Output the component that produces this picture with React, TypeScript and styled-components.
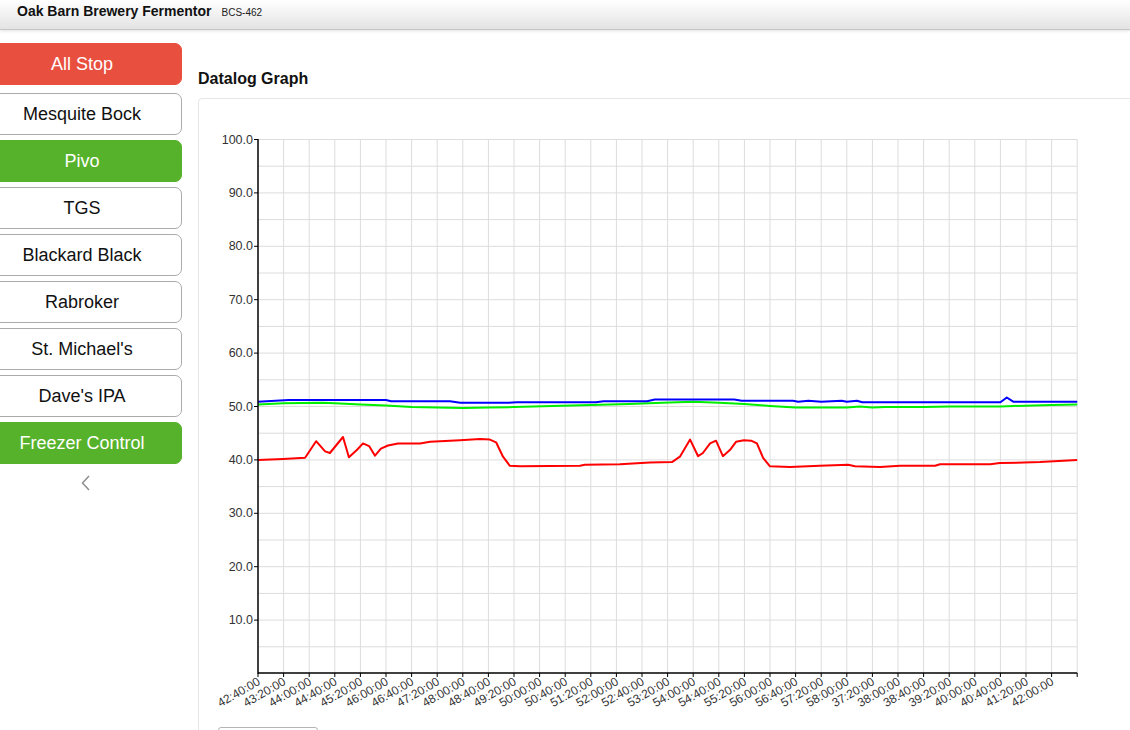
import React from 'react'
import styled, { createGlobalStyle } from 'styled-components'

const GlobalStyle = createGlobalStyle`
  html, body {
    margin: 0;
    padding: 0;
    height: 730px;
    overflow: hidden;
    background: #fff;
    font-family: "Liberation Sans", Arial, sans-serif;
  }
`

type Variant = 'stop' | 'active' | 'idle'

const RECIPES: { name: string; variant: Variant }[] = [
  { name: 'Mesquite Bock', variant: 'idle' },
  { name: 'Pivo', variant: 'active' },
  { name: 'TGS', variant: 'idle' },
  { name: 'Blackard Black', variant: 'idle' },
  { name: 'Rabroker', variant: 'idle' },
  { name: "St. Michael's", variant: 'idle' },
  { name: "Dave's IPA", variant: 'idle' },
  { name: 'Freezer Control', variant: 'active' },
]

const TIME_LABELS = [
  '42:40:00', '43:20:00', '44:00:00', '44:40:00', '45:20:00', '46:00:00', '46:40:00', '47:20:00',
  '48:00:00', '48:40:00', '49:20:00', '50:00:00', '50:40:00', '51:20:00', '52:00:00', '52:40:00',
  '53:20:00', '54:00:00', '54:40:00', '55:20:00', '56:00:00', '56:40:00', '57:20:00', '58:00:00',
  '37:20:00', '38:00:00', '38:40:00', '39:20:00', '40:00:00', '40:40:00', '41:20:00', '42:00:00',
]

// [tick position, temperature]
type Reading = [number, number]

const RED: Reading[] = [
  [0, 39.9], [0.98, 40.1], [1.84, 40.3], [2.27, 43.4], [2.62, 41.5], [2.81, 41.2], [3.32, 44.2],
  [3.55, 40.4], [3.87, 41.8], [4.1, 43.0], [4.34, 42.5], [4.57, 40.7], [4.8, 42.0], [5.08, 42.6],
  [5.47, 43.0], [6.33, 43.0], [6.72, 43.3], [7.89, 43.6], [8.67, 43.8], [9.06, 43.7], [9.3, 43.2],
  [9.57, 40.5], [9.84, 38.8], [10.23, 38.7], [12.58, 38.8], [12.77, 39.0], [14.14, 39.1],
  [15.31, 39.4], [16.17, 39.5], [16.48, 40.5], [16.88, 43.7], [17.19, 40.6], [17.38, 41.2],
  [17.66, 43.0], [17.89, 43.5], [18.16, 40.6], [18.44, 41.8], [18.67, 43.3], [18.98, 43.6],
  [19.26, 43.5], [19.49, 43.0], [19.73, 40.3], [20.0, 38.7], [20.78, 38.6], [21.95, 38.8],
  [23.05, 39.0], [23.32, 38.7], [24.3, 38.6], [25.08, 38.8], [26.45, 38.8], [26.64, 39.1],
  [28.6, 39.1], [28.98, 39.3], [30.55, 39.5], [32, 39.9],
]

const GREEN: Reading[] = [
  [0, 50.3], [1, 50.5], [2.5, 50.6], [3, 50.5], [4, 50.3], [5, 50.1], [6, 49.8], [7, 49.7],
  [8, 49.6], [9, 49.7], [10, 49.8], [11.5, 50.0], [13, 50.2], [14.5, 50.4], [15.8, 50.6],
  [17, 50.8], [18, 50.6], [19, 50.4], [20, 50.0], [21, 49.7], [23, 49.7], [23.5, 49.9], [24, 49.7],
  [24.5, 49.8], [26, 49.8], [27, 49.9], [29, 49.9], [29.5, 50.0], [31, 50.2], [32, 50.3],
]

const BLUE: Reading[] = [
  [0, 50.8], [1.2, 51.1], [5, 51.1], [5.2, 50.9], [7.5, 50.9], [7.9, 50.6], [9.8, 50.6],
  [10.1, 50.7], [13.2, 50.7], [13.5, 50.9], [15.2, 50.9], [15.5, 51.2], [18.6, 51.2], [18.9, 51.0],
  [20.9, 51.0], [21.1, 50.8], [21.5, 51.0], [22, 50.8], [22.8, 51.0], [23, 50.8], [23.4, 51.0],
  [23.6, 50.7], [29, 50.7], [29.25, 51.6], [29.5, 50.8], [32, 50.8],
]

const PLOT_LEFT = 59
const PLOT_TOP = 40
const PLOT_BOTTOM = 574
const TICK_GAP = 25.6
const TICK_COUNT = 32
const PLOT_RIGHT = PLOT_LEFT + TICK_GAP * TICK_COUNT
const UNIT = (PLOT_BOTTOM - PLOT_TOP) / 100

const xAt = (t: number) => PLOT_LEFT + t * TICK_GAP
const yAt = (v: number) => PLOT_BOTTOM - v * UNIT
const toPoints = (series: Reading[]) => series.map(([t, v]) => `${xAt(t).toFixed(1)},${yAt(v).toFixed(1)}`).join(' ')

const ChevronLeft = () => (
  <svg width="10" height="16" viewBox="0 0 10 16">
    <polyline points="8,1 1.5,8 8,15" fill="none" stroke="#8a8a8a" strokeWidth="1.4" />
  </svg>
)

const DatalogChart = () => {
  const hLines = Array.from({ length: 20 }, (_, i) => (i + 1) * 5)
  const vLines = Array.from({ length: TICK_COUNT }, (_, i) => i + 1)
  const yLabels = Array.from({ length: 10 }, (_, i) => (i + 1) * 10)
  return (
    <ChartSvg width="931" height="620" viewBox="0 0 931 620">
      <g stroke="#dcdcdc" strokeWidth="1">
        {hLines.map((v) => (
          <line key={`h${v}`} x1={PLOT_LEFT} x2={PLOT_RIGHT} y1={yAt(v) + 0.5} y2={yAt(v) + 0.5} />
        ))}
        {vLines.map((t) => (
          <line key={`v${t}`} x1={xAt(t)} x2={xAt(t)} y1={PLOT_TOP} y2={PLOT_BOTTOM} />
        ))}
      </g>
      <g fill="#333" fontSize="12.5" textAnchor="end">
        {yLabels.map((v) => (
          <g key={`y${v}`}>
            <line x1={PLOT_LEFT - 4} x2={PLOT_LEFT} y1={yAt(v) + 0.5} y2={yAt(v) + 0.5} stroke="#000" />
            <text x={PLOT_LEFT - 5} y={yAt(v) + 4.5}>
              {v.toFixed(1)}
            </text>
          </g>
        ))}
      </g>
      <g stroke="#000" strokeWidth="1">
        {Array.from({ length: TICK_COUNT + 1 }, (_, i) => (
          <line key={`t${i}`} x1={xAt(i)} x2={xAt(i)} y1={PLOT_BOTTOM} y2={PLOT_BOTTOM + 4} />
        ))}
      </g>
      <g fill="#333" fontSize="12" textAnchor="end">
        {TIME_LABELS.map((label, i) => (
          <text key={label + i} transform={`translate(${xAt(i) + 3},${PLOT_BOTTOM + 11}) rotate(-30)`}>
            {label}
          </text>
        ))}
      </g>
      <g fill="none" strokeWidth="2" strokeLinejoin="round">
        <polyline points={toPoints(GREEN)} stroke="#00ee00" />
        <polyline points={toPoints(BLUE)} stroke="#0000ff" />
        <polyline points={toPoints(RED)} stroke="#ff0000" />
      </g>
      <g stroke="#000" strokeWidth="1.5">
        <line x1={PLOT_LEFT} x2={PLOT_LEFT} y1={PLOT_TOP} y2={PLOT_BOTTOM + 0.75} />
        <line x1={PLOT_LEFT} x2={PLOT_RIGHT} y1={PLOT_BOTTOM} y2={PLOT_BOTTOM} />
      </g>
    </ChartSvg>
  )
}

export default function App() {
  return (
    <>
      <GlobalStyle />
      <Header>
        <DeviceName>Oak Barn Brewery Fermentor</DeviceName>
        <DeviceModel>BCS-462</DeviceModel>
      </Header>
      <Body>
        <Sidebar>
          <RecipeButton $variant="stop" $spaced>
            All Stop
          </RecipeButton>
          {RECIPES.map((r) => (
            <RecipeButton key={r.name} $variant={r.variant}>
              {r.name}
            </RecipeButton>
          ))}
          <Collapse>
            <ChevronLeft />
          </Collapse>
        </Sidebar>
        <Main>
          <SectionTitle>Datalog Graph</SectionTitle>
          <Panel>
            <DatalogChart />
            <RangeSelect />
          </Panel>
        </Main>
      </Body>
    </>
  )
}

const Header = styled.div`
  display: flex;
  align-items: baseline;
  height: 30px;
  padding: 2px 0 0 17px;
  box-sizing: border-box;
  background: linear-gradient(#ffffff, #e3e3e3);
  border-bottom: 1px solid #c6c6c6;
  box-shadow: 0 1px 3px rgba(0, 0, 0, 0.12);
`

const DeviceName = styled.span`
  font-size: 14px;
  font-weight: 700;
  color: #111;
  line-height: 18px;
`

const DeviceModel = styled.span`
  margin-left: 10px;
  font-size: 10px;
  color: #222;
`

const Body = styled.div`
  display: flex;
  align-items: flex-start;
`

const Sidebar = styled.div`
  display: flex;
  flex-direction: column;
  width: 200px;
  margin-left: -18px;
  padding-top: 13px;
  flex-shrink: 0;
`

const variantColors: Record<Variant, { bg: string; fg: string; border: string }> = {
  stop: { bg: '#e84f3f', fg: '#fff', border: '#e84f3f' },
  active: { bg: '#57b22b', fg: '#fff', border: '#57b22b' },
  idle: { bg: '#fff', fg: '#111', border: '#ababab' },
}

const RecipeButton = styled.div<{ $variant: Variant; $spaced?: boolean }>`
  display: flex;
  align-items: center;
  justify-content: center;
  height: 42px;
  box-sizing: border-box;
  margin-bottom: ${(p) => (p.$spaced ? 8 : 5)}px;
  font-size: 18px;
  color: ${(p) => variantColors[p.$variant].fg};
  background: ${(p) => variantColors[p.$variant].bg};
  border: 1px solid ${(p) => variantColors[p.$variant].border};
  border-radius: 7px;
`

const Collapse = styled.div`
  display: flex;
  justify-content: center;
  padding: 6px 0 0 8px;
`

const Main = styled.div`
  flex: 1;
  min-width: 0;
  padding: 40px 0 0 16px;
  margin-right: -12px;
`

const SectionTitle = styled.div`
  font-size: 16px;
  font-weight: 700;
  line-height: 18px;
  color: #111;
  margin-bottom: 10px;
`

const Panel = styled.div`
  border: 1px solid #e6e6e6;
  border-radius: 4px;
  height: 700px;
`

const ChartSvg = styled.svg`
  display: block;
  font-family: "Liberation Sans", Arial, sans-serif;
`

const RangeSelect = styled.div`
  width: 98px;
  height: 28px;
  margin: 8px 0 0 19px;
  border: 1px solid #b5b5b5;
  border-radius: 3px;
`
